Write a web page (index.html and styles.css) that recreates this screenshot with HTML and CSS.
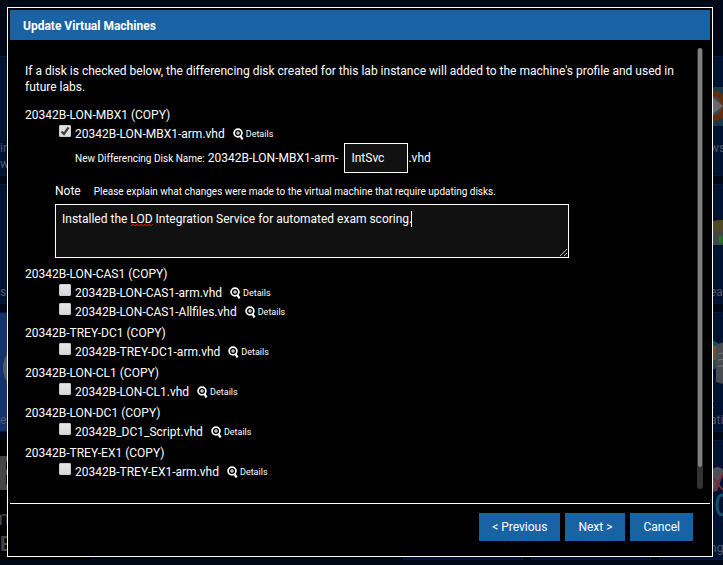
FILE: index.html
```html
<!DOCTYPE html>
<html lang="en">
<head>
<meta charset="utf-8">
<title>Update Virtual Machines</title>
<link rel="stylesheet" href="styles.css">
</head>
<body>
<svg class="defs" aria-hidden="true">
  <symbol id="zoom" viewBox="0 0 11 12">
    <circle cx="5" cy="5" r="3.9" fill="#000" stroke="#fff" stroke-width="1.7"/>
    <path d="M5 3v4M3 5h4" stroke="#fff" stroke-width="1"/>
    <path d="M7.4 8l2.2 3.4" stroke="#fff" stroke-width="2.2"/>
  </symbol>
</svg>

<div class="backdrop" aria-hidden="true">
  <div class="tile left"><span>in</span><span>w</span></div>
  <div class="tile right">
    <svg class="art" viewBox="0 0 40 40"><rect width="40" height="40" y="1" fill="#1d3949"/><circle cx="1" cy="20" r="15" fill="#642c0c"/><circle cx="-1" cy="20" r="10" fill="#3e4650"/><path d="M0 12l10 8-10 8z" fill="#696969"/></svg>
    <span>ws</span><span></span>
  </div>
  <div class="tile left"><span></span><span>sk</span></div>
  <div class="tile right">
    <svg class="art" viewBox="0 0 40 40"><path d="M0 7q14-3 30 4v17l-18 4L0 27z" fill="#514828"/><path d="M0 17l30 4v10H0z" fill="#41464b"/><path d="M6 22h3v7H6z" fill="#168014"/></svg>
    <span></span><span>ea</span>
  </div>
  <div class="tile left bright"><b class="curve"></b><span></span><span>e</span></div>
  <div class="tile right">
    <svg class="art tall" viewBox="0 0 40 50"><circle cx="-4" cy="17" r="15" fill="#174f52"/><path d="M0 8h4v14H0z" fill="#765017"/><path d="M5 6l8-3v44L3 44V9z" fill="#484c51"/><path d="M5 16l9-2M5 22l9-1M5 28h9" stroke="#777" fill="none"/></svg>
    <span>t</span><span>ati</span>
  </div>
  <div class="tile left black"><strong>B</strong><em>m</em><b class="small">E</b></div>
  <div class="tile"></div>
  <div class="tile"></div>
  <div class="tile right">
    <svg class="art tall" viewBox="0 0 40 50"><path d="M0 3q6-5 11 2L4 25H0z" fill="#504f58"/><path d="M0 26L11 6M0 12l10 12" stroke="#792b36" stroke-width="2"/><ellipse cx="9" cy="39" rx="5" ry="10" fill="none" stroke="#164f6b" stroke-width="3"/></svg>
    <span></span><span>ng</span>
  </div>
</div>

<main class="dialog" role="dialog" aria-labelledby="title">
  <h1 id="title" class="title">Update Virtual Machines</h1>
  <form class="form">
    <div class="body">
      <div class="content">
        <p class="intro">If a disk is checked below, the differencing disk created for this lab instance will added to the machine's profile and used in future labs.</p>

        <section class="machine">
          <h2>20342B-LON-MBX1 (COPY)</h2>
          <div class="disk"><input type="checkbox" id="d1" checked><label for="d1">20342B-LON-MBX1-arm.vhd</label><a href="#"><svg><use href="#zoom"/></svg>Details</a></div>
          <div class="rename"><label for="suffix"><small>New Differencing Disk Name:</small> 20342B-LON-MBX1-arm-</label><input id="suffix" type="text" value="IntSvc"><span>.vhd</span></div>
          <div class="note">
            <div class="note-head"><label for="note">Note</label><small>Please explain what changes were made to the virtual machine that require updating disks.</small></div>
            <div class="note-box">
              <textarea id="note" spellcheck="false">Installed the LOD Integration Service for automated exam scoring.</textarea>
              <svg class="squiggle" aria-hidden="true"><path d="M0 2l2-2 2 2 2-2 2 2 2-2 2 2 2-2 2 2 2-2 2 2 2-2" fill="none" stroke="#f00"/></svg>
              <i class="caret" aria-hidden="true"></i>
              <svg class="grip" viewBox="0 0 7 7" aria-hidden="true"><path d="M0 7l7-7M4 7l3-3" stroke="#bbb"/></svg>
            </div>
          </div>
        </section>

        <section class="machine">
          <h2>20342B-LON-CAS1 (COPY)</h2>
          <div class="disk"><input type="checkbox" id="d2"><label for="d2">20342B-LON-CAS1-arm.vhd</label><a href="#"><svg><use href="#zoom"/></svg>Details</a></div>
          <div class="disk"><input type="checkbox" id="d3"><label for="d3">20342B-LON-CAS1-Allfiles.vhd</label><a href="#"><svg><use href="#zoom"/></svg>Details</a></div>
        </section>
        <section class="machine">
          <h2>20342B-TREY-DC1 (COPY)</h2>
          <div class="disk"><input type="checkbox" id="d4"><label for="d4">20342B-TREY-DC1-arm.vhd</label><a href="#"><svg><use href="#zoom"/></svg>Details</a></div>
        </section>
        <section class="machine">
          <h2>20342B-LON-CL1 (COPY)</h2>
          <div class="disk"><input type="checkbox" id="d5"><label for="d5">20342B-LON-CL1.vhd</label><a href="#"><svg><use href="#zoom"/></svg>Details</a></div>
        </section>
        <section class="machine">
          <h2>20342B-LON-DC1 (COPY)</h2>
          <div class="disk"><input type="checkbox" id="d6"><label for="d6">20342B_DC1_Script.vhd</label><a href="#"><svg><use href="#zoom"/></svg>Details</a></div>
        </section>
        <section class="machine">
          <h2>20342B-TREY-EX1 (COPY)</h2>
          <div class="disk"><input type="checkbox" id="d7"><label for="d7">20342B-TREY-EX1-arm.vhd</label><a href="#"><svg><use href="#zoom"/></svg>Details</a></div>
        </section>
      </div>
      <div class="track"><div class="thumb"></div></div>
    </div>
    <footer class="actions">
      <button type="button">&lt; Previous</button>
      <button type="button">Next &gt;</button>
      <button type="button">Cancel</button>
    </footer>
  </form>
</main>
</body>
</html>
```
FILE: styles.css
```css
* { box-sizing: border-box; }

body {
  margin: 0;
  min-height: 100vh;
  overflow: hidden;
  background: #000716;
  color: #fff;
  font: 12px/16px Roboto, "Noto Sans", sans-serif;
}

.defs { position: absolute; width: 0; height: 0; }

/* Dimmed page behind the dialog */
.backdrop {
  display: grid;
  grid-template-columns: 90px 1fr 120px 120px 64px;
  grid-auto-rows: 120px;
  gap: 8px;
  padding-top: 56px;
  height: 100vh;
  overflow: hidden;
  color: #51586a;
}

.tile {
  display: flex;
  flex-direction: column;
  justify-content: flex-end;
  padding-bottom: 3px;
  background: #001232;
  border: 1px solid #001a43;
}

.tile > * { flex-shrink: 0; }
.tile span { min-height: 16px; }
.tile:nth-child(8) { grid-area: 4 / 3; }
.tile:nth-child(9) { grid-area: 4 / 4; }
.left { grid-column: 1; border-left: 0; }
.right { grid-column: 5; padding-left: 50px; border-right: 0; }
.right:nth-child(2) { grid-row: 1; }
.right:nth-child(4) { grid-row: 2; }
.right:nth-child(6) { grid-row: 3; }
.right:nth-child(10) { grid-row: 4; }
.bright { background: #14336a; }
.black { background: #000; border-color: #000; color: #454545; }
.black strong { font-size: 48px; line-height: 60px; margin-left: -4px; }
.black em { font: 20px/28px Roboto, sans-serif; margin-left: -8px; }
.small { font-size: 20px; line-height: 24px; }
.curve { width: 30px; height: 40px; margin: 0 0 8px 3px; border-left: 4px solid #515969; border-radius: 50%; }
.art { width: 40px; height: 40px; margin: 0 -27px 14px 3px; }
.art.tall { height: 50px; margin-bottom: 8px; }

.dialog {
  position: absolute;
  inset: 7px 10px 8px 7px;
  display: flex;
  flex-direction: column;
  padding: 2px;
  background: #000;
  border: 1px solid #fff;
}

.title {
  margin: 0;
  padding: 8px 13px 6px;
  background: #1963a5;
  font-size: 12px;
  line-height: 16px;
  font-weight: 700;
}

.form { display: flex; flex: 1; flex-direction: column; min-height: 0; }
.body { display: flex; flex: 1; min-height: 0; padding: 8px 7px 14px 15px; }
.content { flex: 1; min-width: 0; padding: 15px 16px 0 0; overflow: hidden; }
.track { width: 6px; padding: 0 1px; background: #333; border-radius: 3px; }
.thumb { height: 95%; background: #808080; border-radius: 2px; }

.intro { margin: 0 0 12px; }
.machine { margin-bottom: 5px; }
.machine h2 { margin: 0; font-size: 12px; font-weight: 400; }
.disk { display: flex; align-items: flex-start; height: 19px; padding: 2px 0 0 34px; }
.disk label { padding-top: 1px; }

.disk input {
  appearance: none;
  width: 12px;
  height: 12px;
  margin: 0 4px 0 0;
  background: linear-gradient(#e6e6e6, #d8d8d8);
  border: 1px solid #ccc;
  border-radius: 1px;
}

.disk input:checked {
  background: url("data:image/svg+xml,%3Csvg xmlns='http://www.w3.org/2000/svg' viewBox='0 0 10 10'%3E%3Cpath d='M1.5 5.5l2.5 2.5 4.5-6.5' fill='none' stroke='%23404040' stroke-width='2.2'/%3E%3C/svg%3E") #dedede;
}

.disk a {
  display: flex;
  align-items: center;
  gap: 2px;
  margin-left: 8px;
  padding-top: 1px;
  color: #fff;
  font-size: 9px;
  text-decoration: none;
}

.disk a svg { width: 11px; height: 12px; }
small { font-size: 10px; }
.rename { display: flex; align-items: center; margin-top: 1px; padding-left: 50px; }

.rename input,
textarea {
  background: #111;
  border: 1px solid #fff;
  border-radius: 0;
  color: #fff;
  font: inherit;
  outline: 0;
}

.rename input { width: 64px; height: 30px; margin-left: 6px; padding: 0 6px; }
.note { padding: 10px 0 3px 30px; }
.note-head { display: flex; gap: 13px; align-items: baseline; margin-bottom: 4px; }
.note-box { position: relative; width: 83%; max-width: 514px; }
textarea { display: block; width: 100%; height: 54px; padding: 6px; resize: none; overflow: hidden; }
.squiggle { position: absolute; left: 76px; top: 20px; width: 22px; height: 3px; }
.caret { position: absolute; left: 356px; top: 7px; width: 1px; height: 16px; background: #fff; }
.grip { position: absolute; right: 2px; bottom: 2px; width: 7px; height: 7px; }

.actions {
  display: flex;
  justify-content: flex-end;
  gap: 5px;
  padding: 9px 17px 13px;
  border-top: 1px solid #fff;
}

button {
  padding: 6px 13px;
  background: #1963a5;
  border: 0;
  color: #fff;
  font: inherit;
}
```
